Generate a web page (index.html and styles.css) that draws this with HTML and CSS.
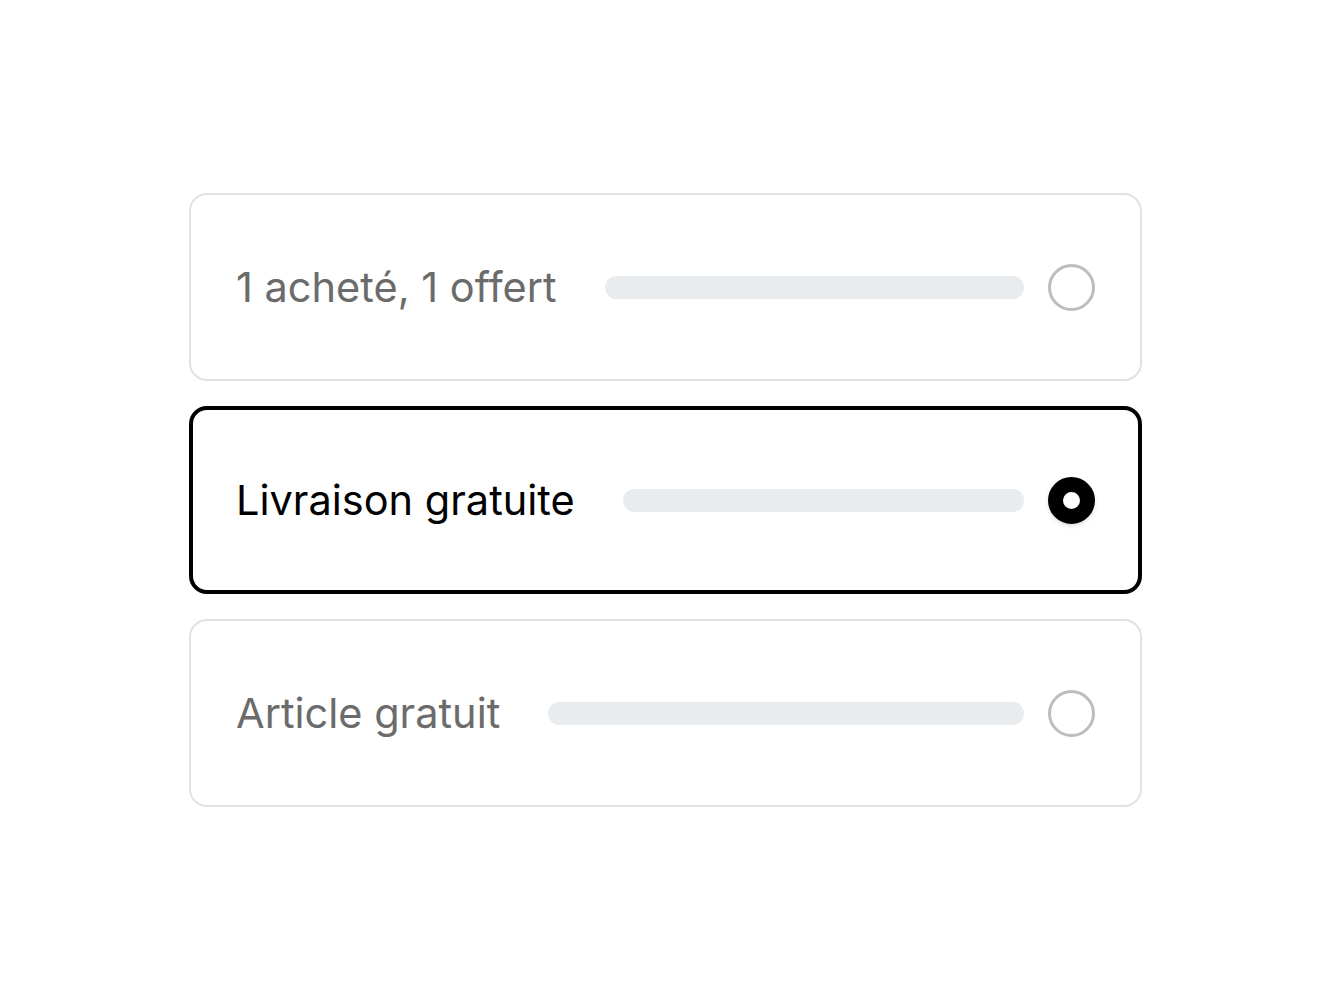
FILE: index.html
```html
<!DOCTYPE html>
<html lang="fr">
<head>
    <meta charset="UTF-8">
    <meta name="viewport" content="width=device-width, initial-scale=1.0">
    <title>Offres</title>
    <link rel="stylesheet" href="styles.css">
</head>
<body>
    <div class="options">
        <div class="option">
            <span class="label">1 acheté, 1 offert</span>
            <span class="bar"></span>
            <span class="radio"></span>
        </div>
        <div class="option selected">
            <span class="label">Livraison gratuite</span>
            <span class="bar"></span>
            <span class="radio"></span>
        </div>
        <div class="option">
            <span class="label">Article gratuit</span>
            <span class="bar"></span>
            <span class="radio"></span>
        </div>
    </div>
</body>
</html>
```
FILE: styles.css
```css
body {
    margin: 0;
    background: #ffffff;
    font-family: Inter, "Noto Sans", sans-serif;
}
.options {
    width: 953px;
    margin: 193px 0 0 189px;
    display: flex;
    flex-direction: column;
    gap: 25px;
}
.option {
    box-sizing: border-box;
    height: 188px;
    display: flex;
    align-items: center;
    gap: 48px;
    padding: 0 45px;
    border: 2px solid #e2e2e2;
    border-radius: 18px;
}
.label {
    font-size: 41.5px;
    color: #6b6b6b;
    white-space: nowrap;
}
.bar {
    flex: 1;
    height: 23px;
    border-radius: 12px;
    background: #e9ecef;
    margin-right: -24px;
}
.radio {
    box-sizing: border-box;
    width: 47px;
    height: 47px;
    border-radius: 50%;
    border: 3px solid #bdbdbd;
    flex-shrink: 0;
}
.option.selected {
    border: 4px solid #000000;
    padding: 0 43px;
}
.option.selected .label {
    color: #000000;
}
.option.selected .radio {
    border: 15px solid #000000;
    box-shadow: 0 2px 4px rgba(0,0,0,0.12);
}
```
